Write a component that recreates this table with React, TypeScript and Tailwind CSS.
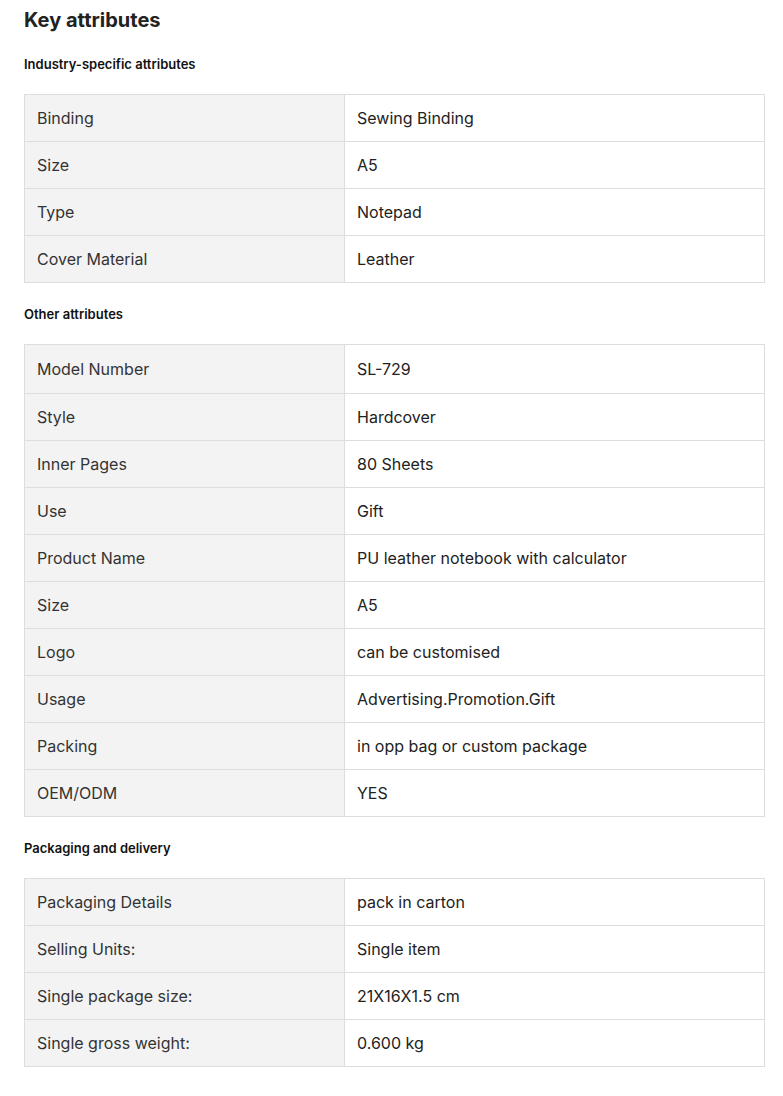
// Key attributes block: a title, then three labelled two-column attribute tables.

type Attr = [string, string]

const industry: Attr[] = [
  ['Binding', 'Sewing Binding'],
  ['Size', 'A5'],
  ['Type', 'Notepad'],
  ['Cover Material', 'Leather'],
]

const other: Attr[] = [
  ['Model Number', 'SL-729'],
  ['Style', 'Hardcover'],
  ['Inner Pages', '80 Sheets'],
  ['Use', 'Gift'],
  ['Product Name', 'PU leather notebook with calculator'],
  ['Size', 'A5'],
  ['Logo', 'can be customised'],
  ['Usage', 'Advertising.Promotion.Gift'],
  ['Packing', 'in opp bag or custom package'],
  ['OEM/ODM', 'YES'],
]

const packaging: Attr[] = [
  ['Packaging Details', 'pack in carton'],
  ['Selling Units:', 'Single item'],
  ['Single package size:', '21X16X1.5 cm'],
  ['Single gross weight:', '0.600 kg'],
]

// tall: the first row is 2px taller (the long table runs a touch over 47px a row)
function AttrTable({ rows, tall }: { rows: Attr[]; tall?: boolean }) {
  return (
    <div className="border border-[#dddddd]">
      {rows.map(([k, v], i) => (
        <div
          key={i}
          className={`flex ${i > 0 ? 'h-[47px] border-t border-[#dddddd]' : tall ? 'h-[48px]' : 'h-[46px]'}`}
        >
          <div className="w-[320px] shrink-0 bg-[#f3f3f3] border-r border-[#dddddd] px-3 pb-px flex items-center text-[#333333]">
            {k}
          </div>
          <div className="flex-1 px-3 pb-px flex items-center text-[#222222]">{v}</div>
        </div>
      ))}
    </div>
  )
}

function Section({ title, rows, tall, first }: { title: string; rows: Attr[]; tall?: boolean; first?: boolean }) {
  return (
    <div>
      <h3 className={`h-5 leading-5 text-[13px] font-semibold text-[#111111] mb-5 ${first ? 'mt-5' : 'mt-[21px]'}`}>
        {title}
      </h3>
      <AttrTable rows={rows} tall={tall} />
    </div>
  )
}

export default function App() {
  return (
    <div
      className="bg-white min-h-[1096px] pl-6 pr-[18px] pt-[6px] text-[16px]"
      style={{ fontFamily: 'Inter, "Noto Sans", sans-serif' }}
    >
      <h2 className="h-7 leading-7 text-[20px] font-bold text-[#222222]">Key attributes</h2>
      <Section title="Industry-specific attributes" rows={industry} first />
      <Section title="Other attributes" rows={other} tall />
      <Section title="Packaging and delivery" rows={packaging} />
    </div>
  )
}
